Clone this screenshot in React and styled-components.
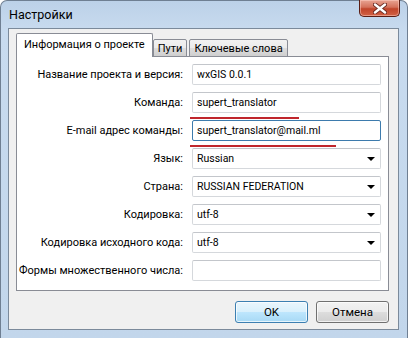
import React from 'react';
import styled, { createGlobalStyle } from 'styled-components';

const GlobalStyle = createGlobalStyle`
  html, body {
    margin: 0;
    padding: 0;
    background: #ffffff;
  }
  body {
    font-family: Roboto, "Liberation Sans", sans-serif;
    font-size: 11px;
  }
`;

const fields = [
  { label: 'Название проекта и версия:', value: 'wxGIS 0.0.1', kind: 'text' },
  { label: 'Команда:', value: 'supert_translator', kind: 'text', mark: 109 },
  { label: 'E-mail адрес команды:', value: 'supert_translator@mail.ml', kind: 'text', focused: true, mark: 146 },
  { label: 'Язык:', value: 'Russian', kind: 'combo' },
  { label: 'Страна:', value: 'RUSSIAN FEDERATION', kind: 'combo' },
  { label: 'Кодировка:', value: 'utf-8', kind: 'combo' },
  { label: 'Кодировка исходного кода:', value: 'utf-8', kind: 'combo' },
  { label: 'Формы множественного числа:', value: '', kind: 'text' },
];

const App = () => {
  return (
    <>
      <GlobalStyle />
      <Window>
        <TitleBar>
          <Title>Настройки</Title>
          <CloseButton>
            <svg width="14" height="11" viewBox="0 0 14 11">
              <path d="M2 1.5 L12 9.5 M12 1.5 L2 9.5" stroke="#6b2a22" strokeWidth="4.2" strokeLinecap="round" />
              <path d="M2 1.5 L12 9.5 M12 1.5 L2 9.5" stroke="#ffffff" strokeWidth="2.4" strokeLinecap="round" />
            </svg>
          </CloseButton>
        </TitleBar>
        <Client>
          <Tabs>
            <Tab active>Информация о проекте</Tab>
            <Tab>Пути</Tab>
            <Tab>Ключевые слова</Tab>
          </Tabs>
          <Panel>
            {fields.map((f) => (
              <Row key={f.label}>
                <Label>{f.label}</Label>
                <Field focused={f.focused}>
                  <FieldText>{f.value}</FieldText>
                  {f.kind === 'combo' && <Arrow />}
                  {f.mark && <Underline style={{ width: f.mark }} />}
                </Field>
              </Row>
            ))}
          </Panel>
          <Buttons>
            <Button primary>OK</Button>
            <Button>Отмена</Button>
          </Buttons>
        </Client>
      </Window>
    </>
  );
};

const Window = styled.div`
  width: 408px;
  height: 338px;
  box-sizing: border-box;
  display: flex;
  flex-direction: column;
  padding: 0 8px 8px 7px;
  border-radius: 7px 7px 0 0;
  border: 1px solid #6f7f92;
  border-bottom: none;
  background: linear-gradient(180deg, #bcd1e8 0px, #c8dbef 30px, #c2d6eb 100%);
`;

const TitleBar = styled.div`
  height: 27px;
  display: flex;
  align-items: flex-start;
  justify-content: space-between;
  margin-right: -1px;
`;

const Title = styled.div`
  font-size: 12.5px;
  color: #000;
  padding: 6px 0 0 1px;
`;

const CloseButton = styled.div`
  width: 41px;
  height: 17px;
  margin-top: -1px;
  box-sizing: border-box;
  border: 1px solid #5a1d14;
  border-top: none;
  border-radius: 0 0 5px 5px;
  background: linear-gradient(180deg, #e8a493 0%, #d4715b 45%, #c0442a 55%, #d26245 100%);
  display: flex;
  align-items: center;
  justify-content: center;
  box-shadow: inset 0 0 0 1px rgba(255, 210, 200, 0.5);
`;

const Client = styled.div`
  flex: 1;
  background: #f0f0f0;
  border: 1px solid #7b8a9b;
  display: flex;
  flex-direction: column;
  padding: 4px 9px 0 7px;
`;

const Tabs = styled.div`
  display: flex;
  align-items: flex-end;
  height: 24px;
  position: relative;
  z-index: 1;
  margin-bottom: -1px;
`;

const Tab = styled.div`
  box-sizing: border-box;
  height: ${(p) => (p.active ? '24px' : '18px')};
  padding: ${(p) => (p.active ? '0 7px 3px 7px' : '0 4px')};
  margin-right: ${(p) => (p.active ? '0' : '2px')};
  display: flex;
  align-items: center;
  border: 1px solid #898c95;
  border-bottom: ${(p) => (p.active ? 'none' : '1px solid #898c95')};
  border-radius: 2px 2px 0 0;
  background: ${(p) =>
    p.active ? '#ffffff' : 'linear-gradient(180deg, #f2f2f2 0%, #ebebeb 50%, #dddddd 51%, #cfcfcf 100%)'};
  color: #000;
  white-space: nowrap;
`;

const Panel = styled.div`
  height: 235px;
  box-sizing: border-box;
  background: #ffffff;
  border: 1px solid #898c95;
  padding: 7px 7px 0 0;
  display: flex;
  flex-direction: column;
  gap: 7px;
`;

const Row = styled.div`
  display: grid;
  grid-template-columns: 166px 1fr;
  column-gap: 9px;
  align-items: center;
`;

const Label = styled.div`
  text-align: right;
  color: #000;
  white-space: nowrap;
`;

const Field = styled.div`
  position: relative;
  height: 21px;
  box-sizing: border-box;
  border: 1px solid ${(p) => (p.focused ? '#3d7bad' : '#d5d8dc')};
  border-top-color: ${(p) => (p.focused ? '#3d7bad' : '#c3c6cb')};
  border-radius: 2px;
  background: #fff;
  display: flex;
  align-items: center;
  padding: 0 5px 0 4px;
`;

const FieldText = styled.span`
  flex: 1;
  font-size: 10.5px;
  color: #000;
  white-space: nowrap;
`;

const Arrow = styled.span`
  width: 0;
  height: 0;
  border-left: 4px solid transparent;
  border-right: 4px solid transparent;
  border-top: 4px solid #000;
  margin-top: 1px;
`;

const Underline = styled.span`
  position: absolute;
  left: -3px;
  top: 24px;
  height: 2px;
  background: #c0262c;
`;

const Buttons = styled.div`
  display: flex;
  justify-content: flex-end;
  gap: 8px;
  padding-top: 10px;
`;

const Button = styled.div`
  width: 73px;
  height: 22px;
  box-sizing: border-box;
  border: 1px solid ${(p) => (p.primary ? '#3c7fb1' : '#707070')};
  border-radius: 3px;
  display: flex;
  align-items: center;
  justify-content: center;
  font-size: 11.5px;
  color: #000;
  background: ${(p) =>
    p.primary
      ? 'linear-gradient(180deg, #eaf6fd 0%, #d9f0fc 50%, #bee6fd 51%, #a7d9f5 100%)'
      : 'linear-gradient(180deg, #f2f2f2 0%, #ebebeb 50%, #dddddd 51%, #cfcfcf 100%)'};
  box-shadow: inset 0 0 0 1px rgba(255, 255, 255, 0.7);
`;

export default App;
